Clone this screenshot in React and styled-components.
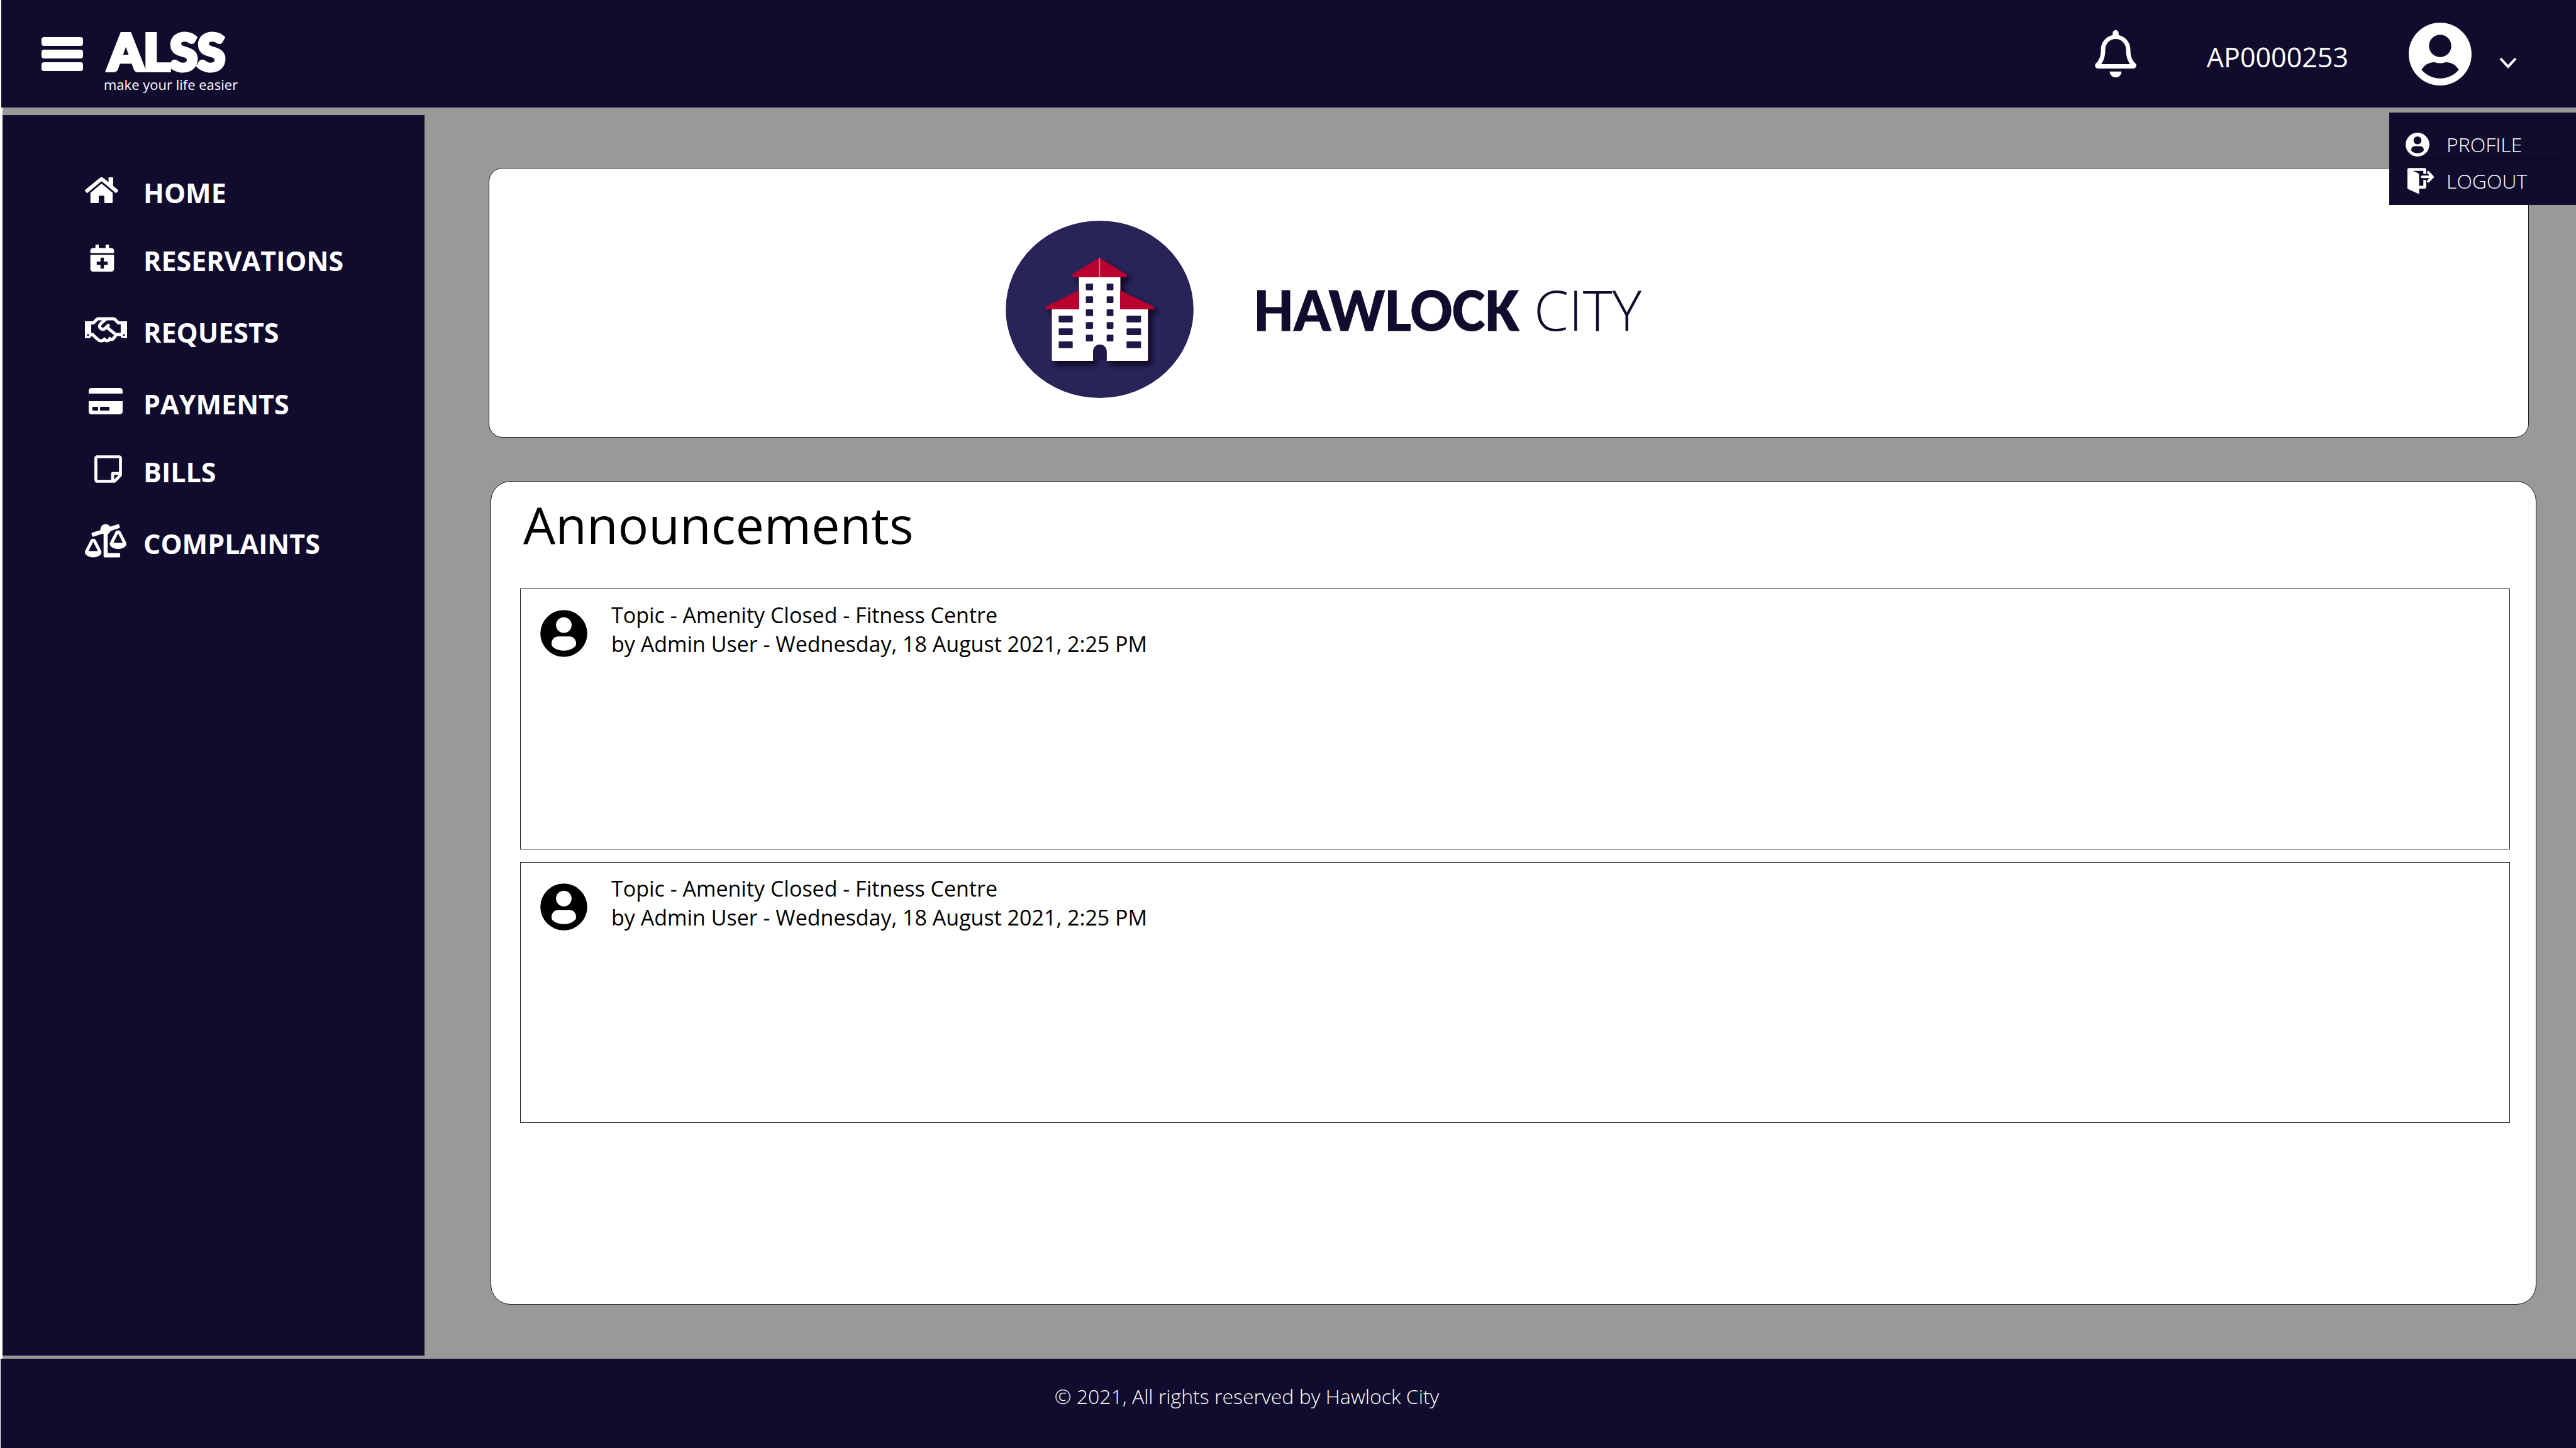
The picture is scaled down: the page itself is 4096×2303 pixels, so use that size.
import React from 'react';
import styled, { createGlobalStyle } from 'styled-components';
import {
  FaHome,
  FaCalendarPlus,
  FaRegHandshake,
  FaCreditCard,
  FaRegStickyNote,
  FaBalanceScaleLeft,
  FaRegBell,
  FaUserCircle,
} from 'react-icons/fa';

const navy = '#110b2d';
const grey = '#9a9898';
const line = '#1a1a1a';
const sans = '"Open Sans", "Noto Sans", sans-serif';

const GlobalStyle = createGlobalStyle`
  *, *::before, *::after { box-sizing: border-box; }
  body { margin: 0; background: ${grey}; font-family: ${sans}; color: #000; }
  button { font: inherit; color: inherit; background: none; border: 0; padding: 0; cursor: pointer; }
  a { color: inherit; text-decoration: none; }
  h1, h2, p, ul { margin: 0; padding: 0; font-weight: 400; }
  ul { list-style: none; }
  svg { display: block; }
`;

const Page = styled.div`
  display: flex;
  flex-direction: column;
  min-height: 100vh;
`;

/* ---------- header ---------- */

const Header = styled.header`
  position: relative;
  display: flex;
  align-items: center;
  min-height: 171px;
  padding: 0 94px 0 64px;
  border-left: 2px solid #fff;
  background: ${navy};
  color: #fff;
`;

const MenuButton = styled.button`
  display: flex;
  flex-direction: column;
  gap: 6px;
  width: 66px;
`;

const MenuBar = styled.span`
  height: 14px;
  border-radius: 4px;
  background: #fff;
`;

const Brand = styled.a`
  display: flex;
  flex-direction: column;
  margin: 26px auto 0 33px;
`;

const BrandName = styled.span`
  padding: 0 0 7px 7px;
  font: 900 80px/64px Lato, sans-serif;
  -webkit-text-stroke: 6px #fff;
`;

const Tagline = styled.span`
  font-size: 22px;
  line-height: 28px;
`;

const BellButton = styled.button`
  margin-right: 112px;
  svg { width: 66px; height: 75px; }
`;

const UserId = styled.span`
  padding-top: 10px;
  margin-right: 96px;
  font-size: 43px;
  line-height: 60px;
`;

const AccountButton = styled.button`
  display: flex;
  align-items: center;
  gap: 44px;
`;

const Avatar = styled(FaUserCircle)`
  width: 100px;
  height: 104px;
`;

const Chevron = styled.svg`
  width: 28px;
  height: 18px;
  margin-top: 28px;
`;

const AccountMenu = styled.nav`
  position: absolute;
  z-index: 1;
  top: calc(100% + 8px);
  right: 0;
  width: 297px;
  padding: 30px 22px 17px 26px;
  background: ${navy};
`;

const AccountLink = styled.a`
  display: grid;
  grid-template-columns: 46px 1fr;
  column-gap: 19px;
  align-items: center;
  font-weight: 300;
  font-size: 32px;
  line-height: 42px;
`;

const MenuDivider = styled.hr`
  height: 1px;
  margin: 0 0 15px;
  border: 0;
  background: #000;
`;

const LogoutSvg = styled.svg`
  width: 46px;
  height: 42px;
`;

const AccountSvg = styled.svg`
  width: ${(p) => p.$size}px;
  height: ${(p) => p.$size}px;
  flex: none;
`;

/* ---------- body ---------- */

const Body = styled.div`
  display: flex;
  flex: 1;
  border-left: 4px solid #fff;
  background: ${grey};
`;

const Sidebar = styled.nav`
  flex: none;
  width: 671px;
  margin: 12px 0 5px;
  padding: 96px 0 0 131px;
  background: ${navy};
  color: #fff;
`;

const spaces = { small: 52, large: 58 };

const NavItem = styled.li`
  margin-bottom: ${(p) => spaces[p.$space]}px;
`;

const NavLink = styled.a`
  display: grid;
  grid-template: 56px / 93px 1fr;
  font-weight: 700;
  font-size: 43px;
  line-height: 56px;
`;

const NavIcon = styled.span`
  display: flex;
  align-items: center;
  height: 46px;
  padding-left: ${(p) => p.$indent}px;
  svg { flex: none; width: ${(p) => p.$width}px; height: auto; }
`;

const Main = styled.main`
  display: flex;
  flex: 1;
  flex-direction: column;
  gap: 69px;
  min-width: 0;
  padding: 96px 63px 86px 102px;
`;

const Banner = styled.section`
  display: flex;
  align-items: center;
  gap: 96px;
  margin-right: 12px;
  padding: 83px 40px 62px 821px;
  border: 1px solid ${line};
  border-radius: 22px;
  background: #fff;
`;

const BuildingLogo = styled.svg`
  width: 299px;
  height: 282px;
`;

const BannerTitle = styled.h1`
  font: 300 89px/120px ${sans};
  color: ${navy};
  white-space: nowrap;
  strong {
    font: 700 99px/120px Carlito, Lato, sans-serif;
    -webkit-text-stroke: 1px ${navy};
  }
`;

const Panel = styled.section`
  flex: 1;
  margin-left: 3px;
  padding: 18px 41px 40px 46px;
  border: 1px solid ${line};
  border-radius: 32px;
  background: #fff;
`;

const PanelTitle = styled.h2`
  padding-left: 5px;
  margin-bottom: 52px;
  font-size: 81px;
  line-height: 100px;
`;

const AnnouncementList = styled.ul`
  display: grid;
  gap: 20px;
`;

const Card = styled.li`
  display: flex;
  align-items: flex-start;
  gap: 38px;
  min-height: 415px;
  padding: 18px 31px;
  border: 1px solid ${line};
`;

const CardAvatar = styled.span`
  padding-top: 15px;
`;

const CardText = styled.p`
  font-size: 34px;
  line-height: 46px;
`;

const Footer = styled.footer`
  padding: 38px 132px 60px 0;
  border-left: 1px solid #fff;
  background: ${navy};
  color: #fff;
  font-weight: 300;
  font-size: 32px;
  line-height: 44px;
  text-align: center;
`;

/* ---------- drawings ---------- */

function AccountIcon({ size }) {
  return (
    <AccountSvg $size={size} viewBox="403 1206 308 306" fill="currentColor" fillRule="evenodd" aria-hidden="true">
      <path d="M557 1206a153 153 0 1 0 0 306a153 153 0 1 0 0-306ZM557 1253a51 51 0 1 1 0 102a51 51 0 1 1 0-102ZM522 1379H593C618 1379 637 1398 637 1423V1430Q637 1436 632 1442C615 1460 588 1471 557 1471S497 1460 481 1442Q477 1436 477 1430V1423C477 1398 497 1379 522 1379Z" />
    </AccountSvg>
  );
}

function LogoutIcon() {
  return (
    <LogoutSvg viewBox="84 302 192 176" aria-hidden="true">
      <path
        d="M105 303H212Q221 303 221 312V342H202V322H133L166 337Q174 341 174 349V421H202V383H221V431Q221 440 212 440H174V477L101 443Q96 441 96 436V312Q96 303 105 303Z"
        fill="#fff"
      />
      <path d="M194 362H262M235 332L264 362L235 391" fill="none" stroke="#fff" strokeWidth="17" strokeLinecap="round" strokeLinejoin="round" />
    </LogoutSvg>
  );
}

const towerWindows = [187, 215, 244, 272, 300];
const wingWindows = [258, 286, 315];

function Building() {
  return (
    <BuildingLogo viewBox="72 48 415 392" role="img" aria-label="Hawlock City">
      <defs>
        <filter id="drop" x="-20%" y="-20%" width="150%" height="150%">
          <feDropShadow dx="8" dy="9" stdDeviation="6" floodColor="#080612" floodOpacity="0.9" />
        </filter>
      </defs>
      <ellipse cx="279.5" cy="244" rx="207.5" ry="196" fill="#282359" />
      <g filter="url(#drop)">
        <path d="M234 172H325V244H386V356Q386 358 384 358H295V337A15 15 0 0 0 265 337V358H176Q174 358 174 356V244H234Z" fill="#fff" />
        <path d="M279 130L339 167Q342 173 337 173H221Q216 173 219 167ZM234 202V244H163Q157 244 160 238ZM325 202V244H396Q402 244 399 238Z" fill="#ba002e" />
      </g>
      <path d="M279 131V172" stroke="#d9738c" strokeWidth="3" />
      <path d="M265 357V337A15 15 0 0 1 295 337V357Z" fill="#21184a" />
      <g fill="#21184a">
        {towerWindows.map((y) => (
          <React.Fragment key={y}>
            <rect x="249" y={y} width="16" height="15" rx="2" />
            <rect x="295" y={y} width="15" height="15" rx="2" />
          </React.Fragment>
        ))}
        {wingWindows.map((y) => (
          <React.Fragment key={y}>
            <rect x="189" y={y} width="31" height="15" rx="2" />
            <rect x="339" y={y} width="32" height="15" rx="2" />
          </React.Fragment>
        ))}
      </g>
    </BuildingLogo>
  );
}

/* ---------- data ---------- */

const navItems = [
  { label: 'HOME', Icon: FaHome, width: 53, indent: 0, space: 'small' },
  { label: 'RESERVATIONS', Icon: FaCalendarPlus, width: 43, indent: 6, space: 'large' },
  { label: 'REQUESTS', Icon: FaRegHandshake, width: 67, indent: 0, space: 'large' },
  { label: 'PAYMENTS', Icon: FaCreditCard, width: 54, indent: 6, space: 'small' },
  { label: 'BILLS', Icon: FaRegStickyNote, width: 50, indent: 12, space: 'large' },
  { label: 'COMPLAINTS', Icon: FaBalanceScaleLeft, width: 66, indent: 0, space: 'small' },
];

const announcements = [
  { id: 1, topic: 'Topic - Amenity Closed - Fitness Centre', by: 'by Admin User - Wednesday, 18 August 2021, 2:25 PM' },
  { id: 2, topic: 'Topic - Amenity Closed - Fitness Centre', by: 'by Admin User - Wednesday, 18 August 2021, 2:25 PM' },
];

export default function App() {
  return (
    <Page>
      <GlobalStyle />
      <Header>
        <MenuButton type="button" aria-label="Menu">
          <MenuBar />
          <MenuBar />
          <MenuBar />
        </MenuButton>
        <Brand href="#home">
          <BrandName>ALSS</BrandName>
          <Tagline>make your life easier</Tagline>
        </Brand>
        <BellButton type="button" aria-label="Notifications">
          <FaRegBell />
        </BellButton>
        <UserId>AP0000253</UserId>
        <AccountButton type="button" aria-label="Account" aria-expanded="true">
          <Avatar />
          <Chevron viewBox="0 0 28 18" aria-hidden="true">
            <path d="M2 2L14 15L26 2" fill="none" stroke="#fff" strokeWidth="4" />
          </Chevron>
        </AccountButton>
        <AccountMenu aria-label="Account">
          <AccountLink href="#profile">
            <AccountIcon size={38} />
            PROFILE
          </AccountLink>
          <MenuDivider />
          <AccountLink href="#logout">
            <LogoutIcon />
            LOGOUT
          </AccountLink>
        </AccountMenu>
      </Header>

      <Body>
        <Sidebar aria-label="Main">
          <ul>
            {navItems.map(({ label, Icon, width, indent, space }) => (
              <NavItem key={label} $space={space}>
                <NavLink href={`#${label.toLowerCase()}`}>
                  <NavIcon $width={width} $indent={indent}>
                    <Icon />
                  </NavIcon>
                  {label}
                </NavLink>
              </NavItem>
            ))}
          </ul>
        </Sidebar>

        <Main>
          <Banner>
            <Building />
            <BannerTitle>
              <strong>HAWLOCK</strong> CITY
            </BannerTitle>
          </Banner>

          <Panel>
            <PanelTitle>Announcements</PanelTitle>
            <AnnouncementList>
              {announcements.map(({ id, topic, by }) => (
                <Card key={id}>
                  <CardAvatar>
                    <AccountIcon size={75} />
                  </CardAvatar>
                  <CardText>
                    {topic}
                    <br />
                    {by}
                  </CardText>
                </Card>
              ))}
            </AnnouncementList>
          </Panel>
        </Main>
      </Body>

      <Footer>© 2021, All rights reserved by Hawlock City</Footer>
    </Page>
  );
}
